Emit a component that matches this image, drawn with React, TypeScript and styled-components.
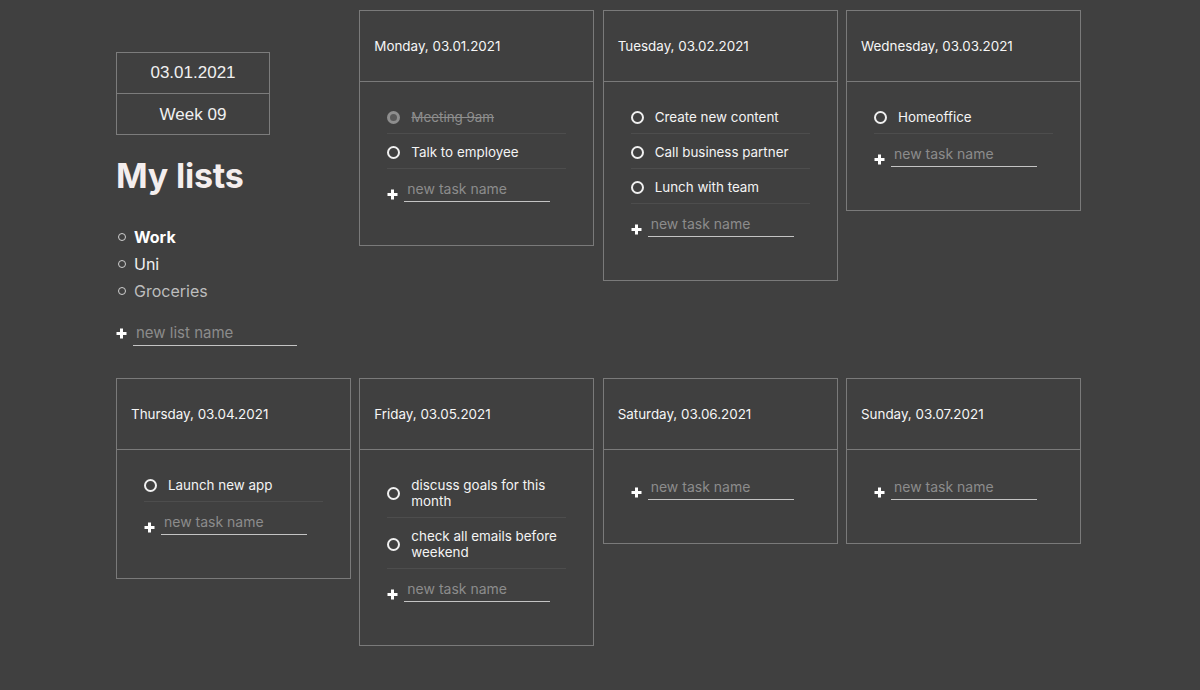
import React from "react";
import styled, { createGlobalStyle } from "styled-components";

const Global = createGlobalStyle`
  html, body { margin: 0; padding: 0; background: #404040; }
  body { font-family: Inter, "Noto Sans", sans-serif; color: #eeeeee; }
  * { box-sizing: border-box; }
  input { font-family: inherit; }
`;

const Page = styled.div`
  min-height: 690px;
  background: #404040;
  padding: 10px 0 0 116px;
  display: grid;
  grid-template-columns: repeat(4, 235px);
  grid-template-rows: 359px auto;
  column-gap: 8.33px;
  row-gap: 9px;
  align-items: start;
`;

const Sidebar = styled.aside`
  padding-top: 42px;
  display: flex;
  flex-direction: column;
`;

const DateBox = styled.div`
  width: 154px;
  border: 1px solid #7c7c7c;
  display: flex;
  flex-direction: column;
`;

const DateCell = styled.div<{ $top?: boolean }>`
  height: ${(p) => (p.$top ? "41px" : "40px")};
  display: flex;
  align-items: center;
  justify-content: center;
  font-family: "Liberation Sans", Arial, sans-serif;
  font-size: 17px;
  color: #f0f0f0;
  padding-top: ${(p) => (p.$top ? "0" : "2px")};
  border-bottom: ${(p) => (p.$top ? "1px solid #7c7c7c" : "none")};
`;

const Heading = styled.h1`
  margin: 21px 0 0 0;
  font-family: Inter, sans-serif;
  font-weight: 700;
  font-size: 34px;
  line-height: 40px;
  color: #f4eeee;
  letter-spacing: -0.2px;
`;

const Lists = styled.ul`
  list-style: none;
  margin: 27px 0 0 0;
  padding: 0;
`;

const ListItem = styled.li<{ $weight: number; $color: string }>`
  display: flex;
  align-items: center;
  gap: 8px;
  height: 27px;
  font-size: 16px;
  font-weight: ${(p) => p.$weight};
  color: ${(p) => p.$color};
  &::before {
    content: "";
    width: 6px;
    height: 6px;
    margin-left: 2px;
    border: 1.5px solid #cfcfcf;
    border-radius: 50%;
    flex-shrink: 0;
  }
`;

const AddRow = styled.div<{ $mt: number; $align: string }>`
  display: flex;
  align-items: ${(p) => p.$align};
  gap: 6px;
  margin-top: ${(p) => p.$mt}px;
`;

const PlusWrap = styled.span`
  display: flex;
  width: 11px;
  height: 11px;
  margin-bottom: 2px;
  flex-shrink: 0;
`;

const TextInput = styled.input<{ $w: number; $fs: number }>`
  width: ${(p) => p.$w}px;
  height: 24px;
  border: none;
  border-bottom: 1.5px solid #c4c4c4;
  background: transparent;
  color: #eeeeee;
  font-size: ${(p) => p.$fs}px;
  padding: 0 3px 2px 3px;
  outline: none;
  &::placeholder { color: #8c8c8c; }
`;

const Card = styled.section`
  border: 1px solid #7a7a7a;
  display: flex;
  flex-direction: column;
`;

const CardHeader = styled.header`
  height: 71px;
  border-bottom: 1px solid #7a7a7a;
  display: flex;
  align-items: center;
  padding-left: 14px;
  padding-bottom: 1px;
  font-size: 13.4px;
  color: #f6f6f6;
`;

const CardBody = styled.div`
  padding: 17px 27px 43px 27px;
`;

const Tasks = styled.ul`
  list-style: none;
  margin: 0;
  padding: 0;
`;

const Task = styled.li<{ $done?: boolean }>`
  display: flex;
  align-items: center;
  gap: 11px;
  padding: 10px 0 8px 0;
  border-bottom: 1px solid #4d4d4d;
  font-size: 13.4px;
  line-height: 16px;
  color: ${(p) => (p.$done ? "#8e8e8e" : "#f4f4f4")};
  text-decoration: ${(p) => (p.$done ? "line-through" : "none")};
`;

const Circle = styled.span<{ $done?: boolean }>`
  width: 13px;
  height: 13px;
  border-radius: 50%;
  flex-shrink: 0;
  border: ${(p) => (p.$done ? "3.5px solid #8e8e8e" : "2px solid #f0f0f0")};
  background: ${(p) => (p.$done ? "#5a5a5a" : "transparent")};
`;

const Plus = () => (
  <PlusWrap>
    <svg width="11" height="11" viewBox="0 0 11 11">
      <path d="M5.5 0.5v10M0.5 5.5h10" stroke="#ffffff" strokeWidth="3" />
    </svg>
  </PlusWrap>
);

type TaskT = { text: string; done?: boolean };
type Day = { title: string; tasks: TaskT[] };

const days: Day[] = [
  { title: "Monday, 03.01.2021", tasks: [{ text: "Meeting 9am", done: true }, { text: "Talk to employee" }] },
  { title: "Tuesday, 03.02.2021", tasks: [{ text: "Create new content" }, { text: "Call business partner" }, { text: "Lunch with team" }] },
  { title: "Wednesday, 03.03.2021", tasks: [{ text: "Homeoffice" }] },
  { title: "Thursday, 03.04.2021", tasks: [{ text: "Launch new app" }] },
  { title: "Friday, 03.05.2021", tasks: [{ text: "discuss goals for this month" }, { text: "check all emails before weekend" }] },
  { title: "Saturday, 03.06.2021", tasks: [] },
  { title: "Sunday, 03.07.2021", tasks: [] },
];

const DayCard = ({ day }: { day: Day }) => (
  <Card>
    <CardHeader>{day.title}</CardHeader>
    <CardBody>
      {day.tasks.length > 0 && (
        <Tasks>
          {day.tasks.map((t) => (
            <Task key={t.text} $done={t.done}>
              <Circle $done={t.done} />
              <span>{t.text}</span>
            </Task>
          ))}
        </Tasks>
      )}
      <AddRow $mt={9} $align="flex-end">
        <Plus />
        <TextInput $w={146} $fs={14} placeholder="new task name" />
      </AddRow>
    </CardBody>
  </Card>
);

export default function App() {
  return (
    <>
      <Global />
      <Page>
        <Sidebar>
          <DateBox>
            <DateCell $top>03.01.2021</DateCell>
            <DateCell>Week 09</DateCell>
          </DateBox>
          <Heading>My lists</Heading>
          <Lists>
            <ListItem $weight={700} $color="#ffffff">Work</ListItem>
            <ListItem $weight={400} $color="#f0f0f0">Uni</ListItem>
            <ListItem $weight={400} $color="#bdbdbd">Groceries</ListItem>
          </Lists>
          <AddRow $mt={18} $align="center">
            <Plus />
            <TextInput $w={164} $fs={15} placeholder="new list name" />
          </AddRow>
        </Sidebar>
        {days.map((d) => (
          <DayCard key={d.title} day={d} />
        ))}
      </Page>
    </>
  );
}
